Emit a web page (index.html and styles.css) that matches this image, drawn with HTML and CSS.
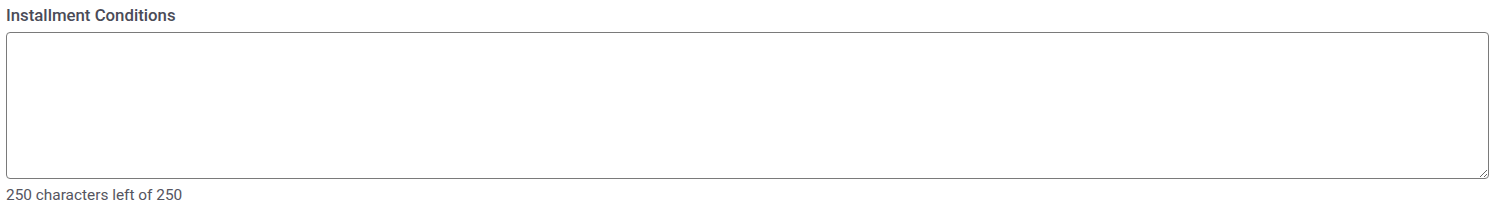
FILE: index.html
```html
<!DOCTYPE html>
<html lang="en">
<head>
    <meta charset="UTF-8">
    <title>Installment Conditions</title>
    <link rel="stylesheet" href="styles.css">
</head>
<body>

<div class="field">
    <label class="field-label" for="conditions">Installment Conditions</label>
    <textarea id="conditions" class="field-input" maxlength="250"></textarea>
    <div class="field-counter">250 characters left of 250</div>
</div>

</body>
</html>
```

FILE: styles.css
```css
html, body {
    margin: 0;
    padding: 0;
    background-color: white;
    font-family: Roboto, "Liberation Sans", sans-serif;
}

.field {
    display: flex;
    flex-direction: column;
    padding: 5px 8px 0 6px;
}

.field-label {
    font-size: 16.8px;
    font-weight: 500;
    color: #4a4b57;
    line-height: 20px;
    margin-bottom: 7px;
}

.field-input {
    height: 147px;
    box-sizing: border-box;
    border: 1px solid #7a7a7a;
    border-radius: 4px;
    padding: 6px 8px;
    font-family: inherit;
    font-size: 14px;
    resize: vertical;
    margin: 0;
}

.field-counter {
    font-size: 15.4px;
    color: #555560;
    line-height: 20px;
    margin-top: 6px;
}
```
